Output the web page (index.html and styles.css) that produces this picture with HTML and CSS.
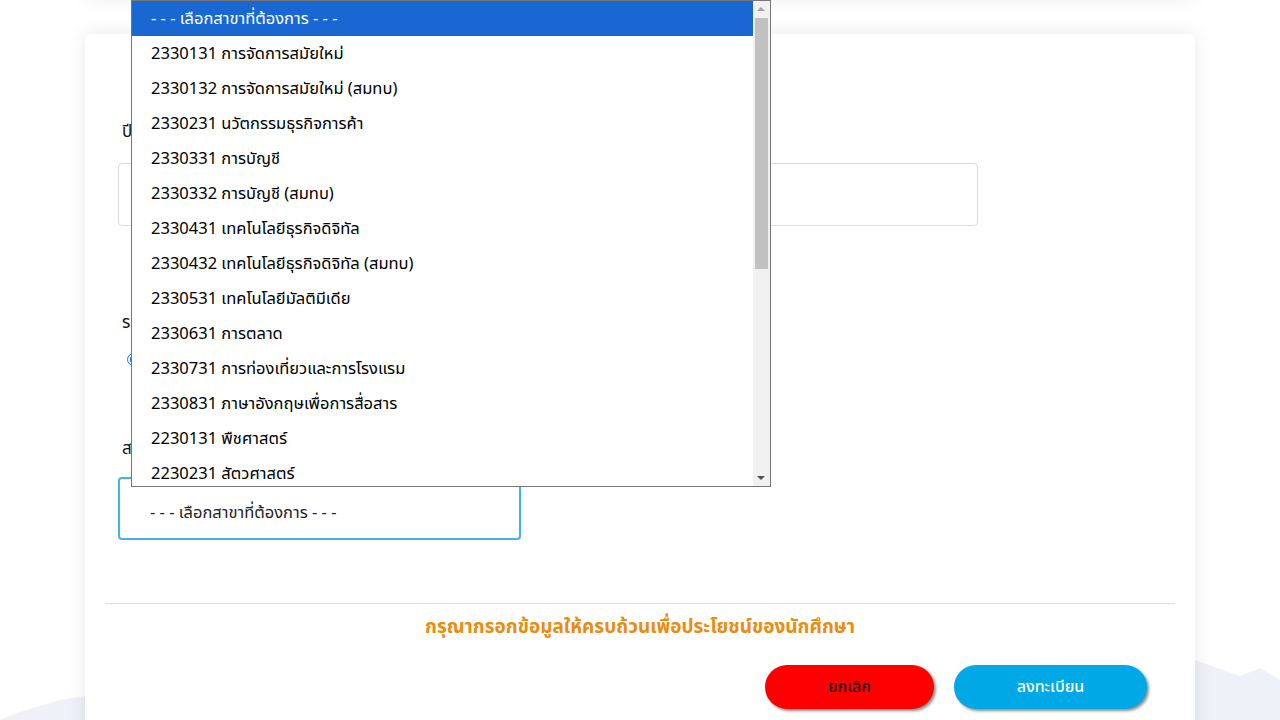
FILE: index.html
```html
<!DOCTYPE html>
<html lang="th">
<head>
<meta charset="utf-8">
<title>ลงทะเบียน</title>
<link rel="stylesheet" href="styles.css">
</head>
<body>
<svg class="bg" viewBox="0 0 1280 720" preserveAspectRatio="none" aria-hidden="true">
  <polygon points="0,720 20,712 60,700 85,696 85,720" fill="#eef2f8"/>
  <polygon points="1195,660 1240,676 1260,668 1280,680 1280,720 1195,720" fill="#eef2f8"/>
</svg>
<div class="page">
  <div class="prev-card"></div>
  <div class="card">
    <div class="form">
      <div class="field field-year">
        <div class="label">ปีการศึกษา</div>
        <div class="input"></div>
      </div>
      <div class="field field-round">
        <div class="label">รอบการสมัคร</div>
        <div class="radios">
          <span class="radio"></span><span class="radio-text">โควตา</span>
        </div>
      </div>
      <div class="field field-major">
        <div class="label">สาขาวิชา</div>
        <div class="select">- - - เลือกสาขาที่ต้องการ - - -</div>
      </div>
    </div>
    <hr class="divider">
    <p class="notice">กรุณากรอกข้อมูลให้ครบถ้วนเพื่อประโยชน์ของนักศึกษา</p>
    <div class="actions">
      <button class="btn btn-cancel">ยกเลิก</button>
      <button class="btn btn-submit">ลงทะเบียน</button>
    </div>
  </div>
</div>

<div class="dropdown">
  <ul class="options">
    <li class="opt selected">- - - เลือกสาขาที่ต้องการ - - -</li>
    <li class="opt">2330131 การจัดการสมัยใหม่</li>
    <li class="opt">2330132 การจัดการสมัยใหม่ (สมทบ)</li>
    <li class="opt">2330231 นวัตกรรมธุรกิจการค้า</li>
    <li class="opt">2330331 การบัญชี</li>
    <li class="opt">2330332 การบัญชี (สมทบ)</li>
    <li class="opt">2330431 เทคโนโลยีธุรกิจดิจิทัล</li>
    <li class="opt">2330432 เทคโนโลยีธุรกิจดิจิทัล (สมทบ)</li>
    <li class="opt">2330531 เทคโนโลยีมัลติมีเดีย</li>
    <li class="opt">2330631 การตลาด</li>
    <li class="opt">2330731 การท่องเที่ยวและการโรงแรม</li>
    <li class="opt">2330831 ภาษาอังกฤษเพื่อการสื่อสาร</li>
    <li class="opt">2230131 พืชศาสตร์</li>
    <li class="opt">2230231 สัตวศาสตร์</li>
  </ul>
  <div class="scrollbar">
    <span class="arrow arrow-up"></span>
    <span class="thumb"></span>
    <span class="arrow arrow-down"></span>
  </div>
</div>
</body>
</html>
```

FILE: styles.css
```css
* { box-sizing: border-box; }
html, body { margin: 0; padding: 0; }
body {
  width: 1280px;
  height: 720px;
  overflow: hidden;
  background: #ffffff;
  font-family: "Noto Sans", "Noto Sans Thai", "DejaVu Sans", sans-serif;
  color: #111;
  position: relative;
}
.bg {
  position: absolute;
  left: 0; top: 0;
  width: 1280px; height: 720px;
  z-index: 0;
}
.page {
  position: relative;
  z-index: 1;
}
.prev-card {
  width: 1110px;
  height: 40px;
  margin: -42px auto 0;
  background: #fff;
  border-radius: 6px;
  box-shadow: 0 0 20px rgba(0,0,0,0.08);
}
.card {
  width: 1110px;
  height: 720px;
  margin: 36px auto 0;
  background: #fff;
  border-radius: 6px;
  box-shadow: 0 0 20px rgba(0,0,0,0.09);
  padding: 86px 20px 0;
}
.form {
  padding: 0 13px;
}
.label {
  font-size: 17px;
  line-height: 22px;
  margin-left: 4px;
}
.field-year .input {
  margin-top: 21px;
  width: 860px;
  height: 63px;
  border: 1px solid #dcdcdc;
  border-radius: 4px;
}
.field-round {
  margin-top: 85px;
}
.radios {
  margin-top: 13px;
  display: flex;
  align-items: center;
  gap: 8px;
  padding-left: 9px;
  font-size: 17px;
}
.radio {
  width: 13px;
  height: 13px;
  border-radius: 50%;
  border: 1px solid #1a73e8;
  background: radial-gradient(circle, #1a73e8 0 3.5px, #fff 4px);
}
.field-major {
  margin-top: 65px;
}
.select {
  margin-top: 18px;
  width: 403px;
  height: 63px;
  border: 2px solid #40b4e6;
  border-radius: 4px;
  padding: 7px 0 0 30px;
  display: flex;
  align-items: center;
  font-size: 16.5px;
  color: #222;
}
.divider {
  margin: 63px 0 0;
  border: 0;
  border-top: 1px solid #dedede;
  height: 0;
}
.notice {
  margin: 8px 0 0;
  text-align: center;
  color: #ea8c0f;
  font-weight: 700;
  font-size: 19px;
  line-height: 28px;
}
.actions {
  display: flex;
  justify-content: flex-end;
  gap: 20px;
  padding-right: 28px;
  margin-top: 25px;
}
.btn {
  height: 44px;
  border: 0;
  border-radius: 22px;
  font-family: inherit;
  font-size: 16px;
  font-weight: 500;
  box-shadow: 2px 2px 3px rgba(0,0,0,0.45);
}
.btn-cancel {
  width: 169px;
  background: #ff0000;
  color: #111;
}
.btn-submit {
  width: 193px;
  background: #00a8e6;
  color: #fff;
}

/* open select list overlay */
.dropdown {
  position: absolute;
  z-index: 5;
  left: 131px;
  top: 0;
  width: 640px;
  height: 487px;
  background: #fff;
  border: 1px solid #767676;
  display: flex;
  overflow: hidden;
}
.options {
  list-style: none;
  margin: 0;
  padding: 0;
  flex: 1;
}
.opt {
  height: 35px;
  line-height: 33px;
  padding-left: 19px;
  font-size: 16.5px;
  color: #000;
  white-space: nowrap;
}
.opt.selected {
  background: #1967d2;
  color: #fff;
}
.scrollbar {
  width: 17px;
  background: #f1f1f1;
  position: relative;
}
.thumb {
  position: absolute;
  left: 2px;
  top: 17px;
  width: 13px;
  height: 251px;
  background: #c1c1c1;
}
.arrow {
  position: absolute;
  left: 4px;
  width: 0; height: 0;
  border-left: 4px solid transparent;
  border-right: 4px solid transparent;
}
.arrow-up {
  top: 6px;
  border-bottom: 4px solid #a3a3a3;
}
.arrow-down {
  bottom: 6px;
  border-top: 4px solid #505050;
}
```
